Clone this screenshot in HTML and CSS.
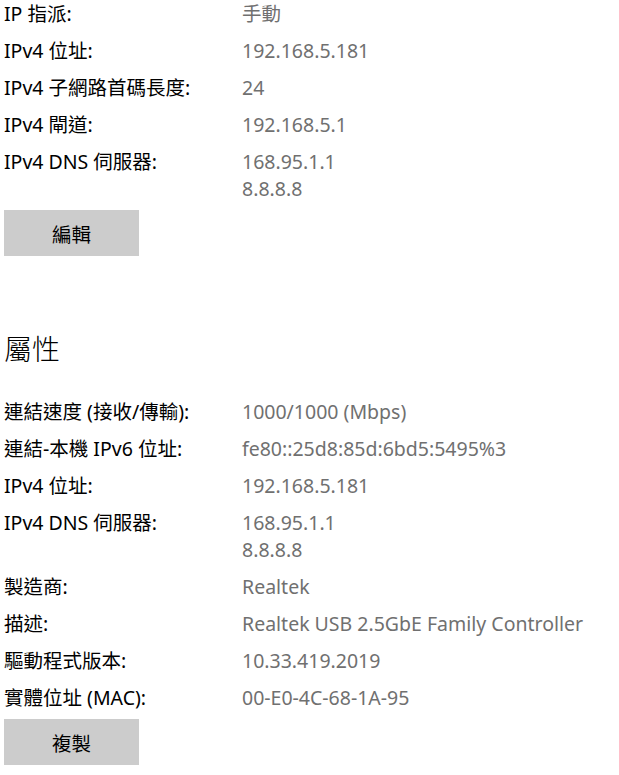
FILE: index.html
```html
<!DOCTYPE html>
<html lang="zh-Hant">
<head>
<meta charset="utf-8">
<link rel="stylesheet" href="styles.css">
</head>
<body>
<div class="page">
  <section class="group">
    <div class="row"><div class="label">IP 指派:</div><div class="value">手動</div></div>
    <div class="row"><div class="label">IPv4 位址:</div><div class="value">192.168.5.181</div></div>
    <div class="row"><div class="label">IPv4 子網路首碼長度:</div><div class="value">24</div></div>
    <div class="row"><div class="label">IPv4 閘道:</div><div class="value">192.168.5.1</div></div>
    <div class="row"><div class="label">IPv4 DNS 伺服器:</div><div class="value">168.95.1.1<br>8.8.8.8</div></div>
    <button class="btn">編輯</button>
  </section>
  <h2 class="heading">屬性</h2>
  <section class="group">
    <div class="row"><div class="label">連結速度 (接收/傳輸):</div><div class="value">1000/1000 (Mbps)</div></div>
    <div class="row"><div class="label">連結-本機 IPv6 位址:</div><div class="value">fe80::25d8:85d:6bd5:5495%3</div></div>
    <div class="row"><div class="label">IPv4 位址:</div><div class="value">192.168.5.181</div></div>
    <div class="row"><div class="label">IPv4 DNS 伺服器:</div><div class="value">168.95.1.1<br>8.8.8.8</div></div>
    <div class="row"><div class="label">製造商:</div><div class="value">Realtek</div></div>
    <div class="row"><div class="label">描述:</div><div class="value">Realtek USB 2.5GbE Family Controller</div></div>
    <div class="row"><div class="label">驅動程式版本:</div><div class="value">10.33.419.2019</div></div>
    <div class="row"><div class="label">實體位址 (MAC):</div><div class="value">00-E0-4C-68-1A-95</div></div>
    <button class="btn">複製</button>
  </section>
</div>
</body>
</html>
```
FILE: styles.css
```css
html, body {
  margin: 0;
  padding: 0;
  background: #ffffff;
}
body {
  font-family: "Noto Sans", "Noto Sans CJK TC", sans-serif;
  font-size: 19.5px;
  color: #000000;
}
.page {
  padding: 0 0 0 4px;
  display: flex;
  flex-direction: column;
}
.group {
  display: flex;
  flex-direction: column;
  gap: 10px;
}
.row {
  display: grid;
  grid-template-columns: 238px 1fr;
  line-height: 27px;
}
.label {
  color: #000000;
}
.value {
  color: #707070;
}
.btn {
  margin-top: -2px;
  width: 135px;
  height: 46px;
  border: none;
  background: #cccccc;
  font-family: "Noto Sans CJK TC", sans-serif;
  font-size: 19.5px;
  color: #000000;
  padding: 0;
}
.heading {
  margin: 73px 0 31px 0;
  font-family: "Noto Sans CJK TC", sans-serif;
  font-weight: 300;
  font-size: 28px;
  line-height: 38px;
}
```
